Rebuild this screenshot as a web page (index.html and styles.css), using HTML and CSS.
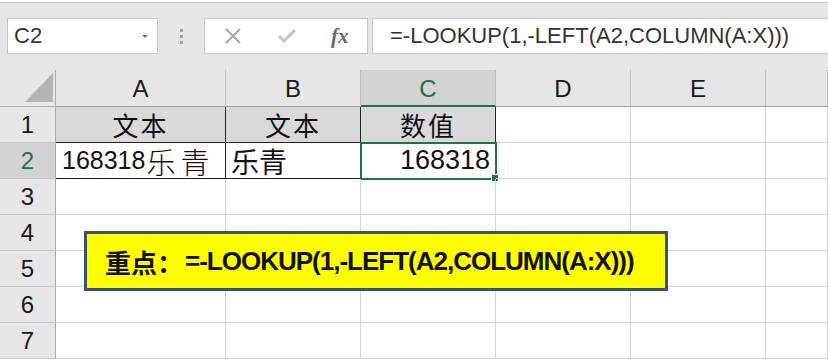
FILE: index.html
```html
<!DOCTYPE html>
<html lang="zh-CN">
<head>
    <meta charset="UTF-8">
    <title>LOOKUP 提取数字</title>
    <link rel="stylesheet" href="styles.css">
</head>
<body>
    <div class="toolbar">
        <div class="name-box">
            <span>C2</span>
            <span class="drop-arrow"></span>
        </div>
        <div class="grip"><i></i><i></i><i></i></div>
        <div class="fx-box">
            <svg class="fx-icon" width="20" height="16" viewBox="0 0 20 16">
                <path d="M3 1 L17 15 M17 1 L3 15" stroke="#a8a8a8" stroke-width="2" fill="none"/>
            </svg>
            <svg class="fx-icon" width="20" height="14" viewBox="0 0 20 14">
                <path d="M2 7 L7 12 L18 1" stroke="#c4c4c4" stroke-width="3" fill="none"/>
            </svg>
            <span class="fx">fx</span>
        </div>
        <div class="formula">=-LOOKUP(1,-LEFT(A2,COLUMN(A:X)))</div>
    </div>

    <div class="sheet">
        <div class="grid">
            <div class="hd corner"><span class="tri"></span></div>
            <div class="hd col">A</div>
            <div class="hd col">B</div>
            <div class="hd col active">C</div>
            <div class="hd col">D</div>
            <div class="hd col">E</div>
            <div class="hd col"></div>

            <div class="hd row">1</div>
            <div class="cell title">文本</div>
            <div class="cell title">文本</div>
            <div class="cell title c1">数值</div>
            <div class="cell"></div>
            <div class="cell"></div>
            <div class="cell"></div>

            <div class="hd row active">2</div>
            <div class="cell data a2">168318<span class="song">乐青</span></div>
            <div class="cell data b2">乐青</div>
            <div class="cell data c2">168318<span class="handle"></span></div>
            <div class="cell"></div>
            <div class="cell"></div>
            <div class="cell"></div>

            <div class="hd row">3</div>
            <div class="cell"></div><div class="cell"></div><div class="cell"></div><div class="cell"></div><div class="cell"></div><div class="cell"></div>
            <div class="hd row">4</div>
            <div class="cell"></div><div class="cell"></div><div class="cell"></div><div class="cell"></div><div class="cell"></div><div class="cell"></div>
            <div class="hd row">5</div>
            <div class="cell"></div><div class="cell"></div><div class="cell"></div><div class="cell"></div><div class="cell"></div><div class="cell"></div>
            <div class="hd row">6</div>
            <div class="cell"></div><div class="cell"></div><div class="cell"></div><div class="cell"></div><div class="cell"></div><div class="cell"></div>
            <div class="hd row">7</div>
            <div class="cell"></div><div class="cell"></div><div class="cell"></div><div class="cell"></div><div class="cell"></div><div class="cell"></div>
        </div>

        <div class="note">重点：<span class="note-code">=-LOOKUP(1,-LEFT(A2,COLUMN(A:X)))</span></div>
    </div>
</body>
</html>
```

FILE: styles.css
```css
body {
    margin: 0;
    width: 828px;
    height: 360px;
    overflow: hidden;
    background: #ffffff;
    font-family: "Liberation Sans", Arial, "Noto Sans CJK SC", sans-serif;
    color: #111;
}

/* 公式栏 */
.toolbar {
    box-sizing: border-box;
    background: #e6e6e6;
    border-top: 1px solid #c8c8c8;
    margin-top: 2px;
    height: 68px;
    padding-top: 15px;
    display: flex;
    align-items: flex-start;
    overflow: hidden;
}

.name-box {
    margin-left: 7px;
    width: 151px;
    height: 36px;
    box-sizing: border-box;
    background: #fff;
    border: 1px solid #c6c6c6;
    display: flex;
    align-items: center;
    justify-content: space-between;
    padding: 0 9px 0 6px;
    font-size: 22px;
    color: #333;
}

.drop-arrow {
    width: 0;
    height: 0;
    border-left: 3px solid transparent;
    border-right: 3px solid transparent;
    border-top: 3px solid #777;
}

.grip {
    width: 46px;
    height: 36px;
    display: flex;
    flex-direction: column;
    align-items: center;
    justify-content: center;
    gap: 3px;
}

.grip i {
    width: 3px;
    height: 3px;
    background: #a0a0a0;
}

.fx-box {
    width: 164px;
    height: 36px;
    box-sizing: border-box;
    background: #fff;
    border: 1px solid #c6c6c6;
    display: flex;
    align-items: center;
    padding-left: 18px;
    gap: 34px;
}

.fx {
    font-family: "Liberation Serif", serif;
    font-style: italic;
    font-weight: bold;
    font-size: 21px;
    color: #6a6a6a;
}

.formula {
    margin-left: 4px;
    flex: 1;
    height: 36px;
    box-sizing: border-box;
    background: #fff;
    border: 1px solid #c6c6c6;
    border-right: none;
    padding-left: 17px;
    font-size: 22px;
    line-height: 34px;
    color: #333;
    white-space: nowrap;
}

/* 表格 */
.sheet {
    position: relative;
    overflow: hidden;
}

.grid {
    display: grid;
    grid-template-columns: 56px 170px 135px 135px 135px 135px 62px;
    grid-template-rows: 37px repeat(7, 36px);
    width: 828px;
}

.hd {
    background: #e6e6e6;
    box-sizing: border-box;
    font-size: 24px;
    color: #1a1a1a;
    display: flex;
    align-items: center;
    justify-content: center;
}

.corner {
    border-right: 1px solid #ababab;
    border-bottom: 1px solid #ababab;
    position: relative;
}

.tri {
    position: absolute;
    left: 25px;
    top: 3px;
    width: 28px;
    height: 29px;
    background: #b4b4b4;
    clip-path: polygon(100% 0, 100% 100%, 0 100%);
}

.col {
    border-right: 1px solid #c0c0c0;
    border-bottom: 1px solid #9e9e9e;
    padding-top: 2px;
}

.col.active {
    background: #d2d2d2;
    color: #217346;
    border-bottom: 2px solid #217346;
}

.row {
    border-right: 1px solid #ababab;
    border-bottom: 1px solid #c8c8c8;
}

.row.active {
    background: #d2d2d2;
    color: #217346;
}

.cell {
    box-sizing: border-box;
    border-right: 1px solid #d4d4d4;
    border-bottom: 1px solid #d4d4d4;
    display: flex;
    align-items: center;
    position: relative;
    white-space: nowrap;
}

.title {
    background: #d9d9d9;
    justify-content: center;
    font-family: "Noto Sans CJK SC", sans-serif;
    font-size: 26px;
    color: #111;
    border-right: 1px solid #222;
    border-bottom: 1px solid #222;
    letter-spacing: 2px;
}

.data {
    font-size: 25px;
    border-right: 1px solid #222;
    border-bottom: 1px solid #222;
}

.a2 {
    padding-left: 6px;
}

.song {
    font-family: "Noto Sans CJK SC", sans-serif;
    font-weight: 300;
    font-size: 29px;
    letter-spacing: 5px;
    margin-left: 1px;
}

.b2 {
    padding-left: 5px;
    font-family: "Noto Sans CJK SC", sans-serif;
    font-size: 28px;
}

.c2 {
    justify-content: flex-end;
    padding-right: 5px;
    font-size: 27px;
    outline: 2px solid #217346;
    outline-offset: -1px;
}

.handle {
    position: absolute;
    right: -4px;
    bottom: -4px;
    width: 6px;
    height: 6px;
    background: #217346;
    border: 1px solid #fff;
}

.note {
    position: absolute;
    left: 84px;
    top: 161px;
    width: 584px;
    height: 60px;
    box-sizing: border-box;
    background: #ffff00;
    border: 3px solid #3a5270;
    padding-left: 18px;
    display: flex;
    align-items: center;
    font-family: "Noto Sans CJK SC", sans-serif;
    font-weight: bold;
    font-size: 26px;
    color: #111;
    white-space: nowrap;
}

.note-code {
    font-family: "Liberation Sans", Arial, sans-serif;
    letter-spacing: -1px;
    margin-left: 2px;
}
```
